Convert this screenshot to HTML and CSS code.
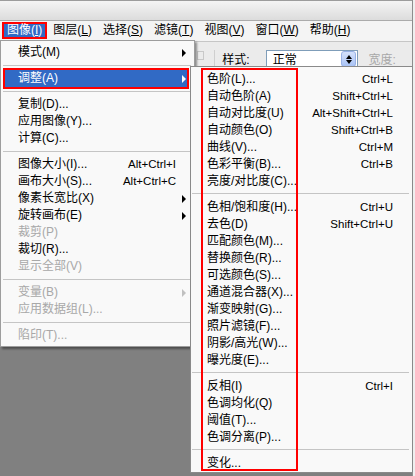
FILE: index.html
```html
<!DOCTYPE html>
<html>
    <head>
        <link rel="stylesheet" href="styles.css">
    </head>
    <body>
    <div class="app">
        <div class="titlebar"></div>
        <nav class="menubar">
            <span class="mb-item open">图像(<u>I</u>)</span>
            <span class="mb-item">图层(<u>L</u>)</span>
            <span class="mb-item">选择(<u>S</u>)</span>
            <span class="mb-item">滤镜(<u>T</u>)</span>
            <span class="mb-item">视图(<u>V</u>)</span>
            <span class="mb-item">窗口(<u>W</u>)</span>
            <span class="mb-item">帮助(<u>H</u>)</span>
        </nav>
        <div class="options">
            <span class="opt-icon"></span>
            <span class="opt-sep"></span>
            <span class="opt-label">样式:</span>
            <span class="select">
                <span class="select-text">正常</span>
                <span class="spin"><i class="up"></i><i class="down"></i></span>
            </span>
            <span class="opt-label off">宽度:</span>
        </div>
        <div class="workspace"></div>

        <!-- image menu -->
        <div class="menu main-menu">
            <div class="row sub"><span>模式(M)</span></div>
            <div class="sep"></div>
            <div class="row sub active"><span>调整(A)</span></div>
            <div class="sep"></div>
            <div class="row"><span>复制(D)...</span></div>
            <div class="row"><span>应用图像(Y)...</span></div>
            <div class="row"><span>计算(C)...</span></div>
            <div class="sep"></div>
            <div class="row"><span>图像大小(I)...</span><span class="key">Alt+Ctrl+I</span></div>
            <div class="row"><span>画布大小(S)...</span><span class="key">Alt+Ctrl+C</span></div>
            <div class="row sub"><span>像素长宽比(X)</span></div>
            <div class="row sub"><span>旋转画布(E)</span></div>
            <div class="row off"><span>裁剪(P)</span></div>
            <div class="row"><span>裁切(R)...</span></div>
            <div class="row off"><span>显示全部(V)</span></div>
            <div class="sep"></div>
            <div class="row sub off"><span>变量(B)</span></div>
            <div class="row off"><span>应用数据组(L)...</span></div>
            <div class="sep"></div>
            <div class="row off"><span>陷印(T)...</span></div>
        </div>

        <!-- adjustments submenu -->
        <div class="menu sub-menu">
            <div class="row"><span>色阶(L)...</span><span class="key">Ctrl+L</span></div>
            <div class="row"><span>自动色阶(A)</span><span class="key">Shift+Ctrl+L</span></div>
            <div class="row"><span>自动对比度(U)</span><span class="key">Alt+Shift+Ctrl+L</span></div>
            <div class="row"><span>自动颜色(O)</span><span class="key">Shift+Ctrl+B</span></div>
            <div class="row"><span>曲线(V)...</span><span class="key">Ctrl+M</span></div>
            <div class="row"><span>色彩平衡(B)...</span><span class="key">Ctrl+B</span></div>
            <div class="row"><span>亮度/对比度(C)...</span></div>
            <div class="sep"></div>
            <div class="row"><span>色相/饱和度(H)...</span><span class="key">Ctrl+U</span></div>
            <div class="row"><span>去色(D)</span><span class="key">Shift+Ctrl+U</span></div>
            <div class="row"><span>匹配颜色(M)...</span></div>
            <div class="row"><span>替换颜色(R)...</span></div>
            <div class="row"><span>可选颜色(S)...</span></div>
            <div class="row"><span>通道混合器(X)...</span></div>
            <div class="row"><span>渐变映射(G)...</span></div>
            <div class="row"><span>照片滤镜(F)...</span></div>
            <div class="row"><span>阴影/高光(W)...</span></div>
            <div class="row"><span>曝光度(E)...</span></div>
            <div class="sep"></div>
            <div class="row"><span>反相(I)</span><span class="key">Ctrl+I</span></div>
            <div class="row"><span>色调均化(Q)</span></div>
            <div class="row"><span>阈值(T)...</span></div>
            <div class="row"><span>色调分离(P)...</span></div>
            <div class="sep"></div>
            <div class="row"><span>变化...</span></div>
            <div class="mark"></div>
        </div>
    </div>
    </body>
</html>
```

FILE: styles.css
```css
* {
    box-sizing: border-box;
}
body {
    margin: 0;
    width: 415px;
    height: 476px;
    overflow: hidden;
    background-color: #efefef;
    font: 12px/17px "Liberation Sans", "Noto Sans CJK SC", sans-serif;
    color: #000;
}
.app {
    position: relative;
    width: 413px;
    height: 476px;
    border-right: 1px solid #8d8d8d;
    display: flex;
    flex-direction: column;
}
.titlebar {
    height: 21px;
    border-top: 1px solid #9c9c9c;
    border-bottom: 1px solid #ababab;
    background: linear-gradient(#f4f4f4, #dcdcdc);
}
.menubar {
    height: 20px;
    display: flex;
    gap: 1px;
    padding: 1px 0 0 2px;
    background-color: #f4f4f4;
}
.mb-item {
    height: 17px;
    line-height: 17px;
    padding: 0 5px;
    white-space: nowrap;
}
.mb-item.open {
    background-color: #316ac5;
    color: #fff;
    box-shadow: inset 0 0 0 2px #f00;
}
.options {
    height: 32px;
    display: flex;
    align-items: flex-start;
    padding: 8px 0 0 197px;
    border-top: 1px solid #c6c6c6;
    background-color: #ebebeb;
}
.opt-icon {
    width: 8px;
    height: 9px;
    margin-top: 1px;
    border: 1px solid #c8c8c8;
}
.opt-sep {
    width: 1px;
    height: 18px;
    margin-left: 10px;
    background-color: #cfcfcf;
}
.opt-label {
    width: 48px;
    margin: 2px 0 0 7px;
}
.opt-label.off {
    margin-left: 10px;
    color: #a8a8a8;
}
.select {
    display: flex;
    width: 102px;
    height: 18px;
    border: 1px solid #7f9db9;
    background-color: #fff;
}
.select-text {
    flex: 1;
    padding-left: 6px;
    line-height: 18px;
}
.spin {
    width: 15px;
    margin: 0 1px 0 0;
    border: 1px solid #98b1e6;
    border-radius: 3px;
    background: linear-gradient(#d4e1fb, #a9c3f5);
    display: flex;
    flex-direction: column;
    align-items: center;
    justify-content: center;
    gap: 1px;
}
.spin i {
    width: 0;
    height: 0;
    border-left: 3px solid transparent;
    border-right: 3px solid transparent;
}
.spin .up {
    border-bottom: 4px solid #000;
}
.spin .down {
    border-top: 4px solid #000;
}
.workspace {
    flex: 1;
    background-color: #808080;
}

/* menus */
.menu {
    position: absolute;
    background-color: #f9f9f9;
    border: 1px solid #9d9d9d;
}
.main-menu {
    left: 0;
    top: 40px;
    width: 195px;
    padding: 3px 7px 2px 4px;
    box-shadow: 2px 2px 2px rgba(0, 0, 0, 0.4);
}
.sub-menu {
    left: 190px;
    top: 66px;
    width: 223px;
    padding: 4px 0 0 0;
    border-color: #8a8a8a;
}
.row {
    position: relative;
    height: 17px;
    display: flex;
    justify-content: space-between;
    padding: 0 11px 0 13px;
    white-space: nowrap;
}
.sub-menu .row {
    padding: 0 19px 0 16px;
}
.key {
    font-size: 11.5px;
}
.row.active {
    background-color: #316ac5;
    color: #fff;
    outline: 2px solid #f00;
}
.row.off {
    color: #a8a8a8;
}
.row.sub::after {
    content: "";
    position: absolute;
    right: 1px;
    top: 5px;
    border-left: 4px solid #000;
    border-top: 4px solid transparent;
    border-bottom: 4px solid transparent;
}
.row.active::after {
    border-left-color: #fff;
}
.row.off::after {
    border-left-color: #c0c0c0;
}
.sep {
    height: 1px;
    margin: 4px -4px 4px -2px;
    background-color: #c5c5c5;
}
.sub-menu .sep {
    margin: 3px 3px 5px 1px;
}
.mark {
    position: absolute;
    left: 10px;
    top: 1px;
    width: 97px;
    height: 403px;
    border: 2px solid #f00;
}
```
